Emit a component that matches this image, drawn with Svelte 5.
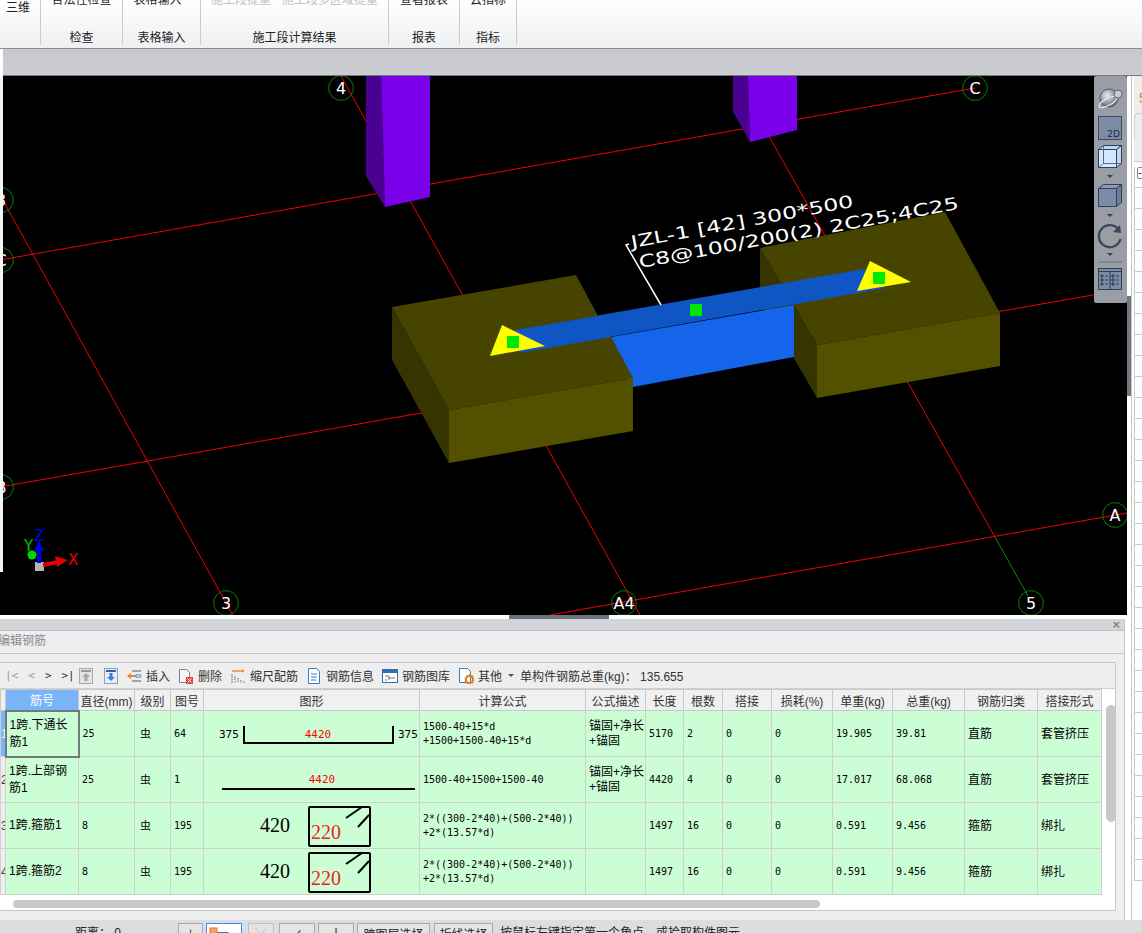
<script>
  const groups = [
    { width: 38, items: ["三维"], label: "", first: true },
    { width: 82, items: ["合法性检查"], label: "检查" },
    { width: 78, items: ["表格输入"], label: "表格输入", shift: -8 },
    { width: 188, items: ["施工段提量", "施工段多区域提量"], label: "施工段计算结果", muted: true },
    { width: 71, items: ["查看报表"], label: "报表" },
    { width: 57, items: ["云指标"], label: "指标" }
  ];

  const red = [
    [341, 76, 640, 615],
    [0, 195, 236, 621],
    [735, 76, 995, 537],
    [0, 260, 975, 88],
    [0, 487, 1127, 289],
    [550, 615, 1127, 513]
  ];

  const axes = [
    { x: 341, y: 88, t: "4" },
    { x: 975, y: 88, t: "C" },
    { x: 1, y: 200, t: "3" },
    { x: 1, y: 260, t: "C" },
    { x: 1, y: 487, t: "B" },
    { x: 226, y: 603, t: "3" },
    { x: 624, y: 603, t: "A4" },
    { x: 1031, y: 603, t: "5" },
    { x: 1115, y: 515, t: "A" }
  ];

  function ring(cx, cy) {
    let pts = [];
    for (let i = 0; i < 12; i++) {
      let a = (i * Math.PI) / 6 + 0.26;
      pts.push((cx + 12.5 * Math.cos(a)).toFixed(1) + "," + (cy + 12.5 * Math.sin(a)).toFixed(1));
    }
    return pts.join(" ");
  }

  const columns = [
    ["", 5], ["筋号", 73], ["直径(mm)", 56], ["级别", 36], ["图号", 33], ["图形", 216],
    ["计算公式", 166], ["公式描述", 60], ["长度", 38], ["根数", 39], ["搭接", 49],
    ["损耗(%)", 61], ["单重(kg)", 60], ["总重(kg)", 72], ["钢筋归类", 73], ["搭接形式", 64]
  ];

  const hoopFormula = "2*((300-2*40)+(500-2*40))\n+2*(13.57*d)";
  const rows = [
    { no: 1, name: "1跨.下通长\n筋1", dia: 25, fig: 64, shape: "u", formula: "1500-40+15*d\n+1500+1500-40+15*d", desc: "锚固+净长\n+锚固", len: 5170, count: 2, unit: "19.905", total: "39.81", kind: "直筋", join: "套管挤压" },
    { no: 2, name: "1跨.上部钢\n筋1", dia: 25, fig: 1, shape: "bar", formula: "1500-40+1500+1500-40", desc: "锚固+净长\n+锚固", len: 4420, count: 4, unit: "17.017", total: "68.068", kind: "直筋", join: "套管挤压" },
    { no: 3, name: "1跨.箍筋1", dia: 8, fig: 195, shape: "hoop", formula: hoopFormula, desc: "", len: 1497, count: 16, unit: "0.591", total: "9.456", kind: "箍筋", join: "绑扎" },
    { no: 4, name: "1跨.箍筋2", dia: 8, fig: 195, shape: "hoop", formula: hoopFormula, desc: "", len: 1497, count: 16, unit: "0.591", total: "9.456", kind: "箍筋", join: "绑扎" }
  ];

  const sideRows = Array.from({ length: 34 }, (_, i) => i);
</script>

<div class="app">
  <header class="ribbon">
    {#each groups as g}
      <section class="group" class:first={g.first} style="width:{g.width}px">
        <div class="items" class:muted={g.muted} style="margin-left:{g.shift || 0}px">
          {#each g.items as item}<span>{item}</span>{/each}
        </div>
        <div class="group-label">{g.label}</div>
      </section>
    {/each}
  </header>
  <div class="tabbar"></div>

  <div class="work">
    <div class="main">
      <div class="viewport">
        <svg class="scene" width="1127" height="539" viewBox="0 76 1127 539">
          <rect x="0" y="76" width="1127" height="539" fill="#000" />

          {#each red as l}
            <line x1={l[0]} y1={l[1]} x2={l[2]} y2={l[3]} stroke="#f00000" stroke-width="1" />
          {/each}
          <line x1="995" y1="537" x2="1028" y2="596" stroke="#0a8a0a" stroke-width="1" />

          {#each axes as a}
            <polygon points={ring(a.x, a.y)} fill="none" stroke="#0b7d0b" stroke-width="1" />
            <text class="axis" x={a.x} y={a.y + 6} text-anchor="middle">{a.t}</text>
          {/each}

          <polygon points="366,76 381,76 385,207 366,176" fill="#4a0090" />
          <polygon points="381,76 430,76 430,197 385,207" fill="#7a00ea" />
          <polygon points="733,76 748,76 750,142 733,112" fill="#4a0090" />
          <polygon points="748,76 797,76 797,130 750,142" fill="#7a00ea" />

          <polygon points="760,248 945,212 1000,313 817,345" fill="#474400" />
          <polygon points="760,248 817,345 817,398 760,300" fill="#363400" />
          <polygon points="817,345 1000,313 1000,366 817,398" fill="#535000" />

          <polygon points="611,337 794,305 794,357 633,387" fill="#1464ec" />
          <polygon points="515,330 864,269 886,288 519,353" fill="#0f55c4" />

          <polygon points="392,307 576,275 598,316 519,330 611,337 633,378 449,410" fill="#474400" />
          <polygon points="392,307 449,410 449,463 392,360" fill="#363400" />
          <polygon points="449,410 633,378 633,431 449,463" fill="#535000" />
          <polygon points="515,330 598,316 611,337 519,353" fill="#0f55c4" />

          <polygon points="502,325 545,346 490,356" fill="#ffff00" />
          <polygon points="870,261 911,282 857,291" fill="#ffff00" />
          <rect x="507" y="336" width="12" height="12" fill="#00e800" />
          <rect x="690" y="304" width="12" height="12" fill="#00e800" />
          <rect x="873" y="272" width="12" height="12" fill="#00e800" />

          <polyline points="629,244 626,245 661,305" fill="none" stroke="#fff" stroke-width="1.5" />
          <text class="note" x="632" y="248" textLength="226" lengthAdjust="spacingAndGlyphs" transform="rotate(-10.5 632 248)">JZL-1 [42] 300*500</text>
          <text class="note" x="640" y="268" textLength="325" lengthAdjust="spacingAndGlyphs" transform="rotate(-10.5 640 268)">C8@100/200(2) 2C25;4C25</text>

          <rect x="35" y="562" width="9" height="9" fill="#b5b5b5" />
          <line x1="43" y1="565" x2="58" y2="562" stroke="#e00000" stroke-width="4" />
          <polygon points="55,556 68,560 57,567" fill="#e00000" />
          <line x1="39" y1="563" x2="39" y2="548" stroke="#0000e8" stroke-width="4" />
          <polygon points="34,551 39,541 44,551" fill="#0000e8" />
          <circle cx="32" cy="555" r="4.5" fill="#00d800" />
          <text class="gizmo" x="34" y="541" fill="#0000f0">Z</text>
          <text class="gizmo" x="24" y="551" fill="#00c800">Y</text>
          <text class="gizmo" x="68" y="565" fill="#f00000">X</text>

          <rect x="0" y="76" width="3" height="496" fill="#f4f4f4" />
        </svg>

        <div class="viewtools">
          <svg width="33" height="227" viewBox="1094 76 33 227">
            <defs>
              <radialGradient id="ball" cx="40%" cy="35%" r="70%">
                <stop offset="0" stop-color="#e8ebf0" />
                <stop offset="1" stop-color="#5c6674" />
              </radialGradient>
            </defs>
            <circle cx="1109" cy="98" r="9" fill="url(#ball)" stroke="#4d5765" />
            <ellipse cx="1108" cy="102" rx="10" ry="3.5" transform="rotate(-28 1108 102)" fill="none" stroke="#e8ebf0" stroke-width="1.2" />
            <circle cx="1118" cy="94" r="4" fill="#c8ced6" stroke="#5a6472" />

            <rect x="1098.5" y="116.5" width="23" height="23" fill="#7c8ca6" stroke="#3b4a60" />
            <text class="tool2d" x="1120" y="137" text-anchor="end">2D</text>

            <rect x="1098.5" y="149.5" width="18" height="18" fill="#d3e8ff" stroke="#2f3f55" />
            <polygon points="1098.5,149.5 1103.5,145.5 1121.5,145.5 1116.5,149.5" fill="#bcd8f6" stroke="#2f3f55" />
            <polygon points="1116.5,149.5 1121.5,145.5 1121.5,163.5 1116.5,167.5" fill="#bcd8f6" stroke="#2f3f55" />
            <path d="M1103.5 145.5v18h18M1103.5 163.5l-5 4" fill="none" stroke="#5a6b82" />
            <polygon points="1107,175 1113,175 1110,178" fill="#2f3f55" />

            <rect x="1098.5" y="188.5" width="18" height="18" fill="#7c8ca6" stroke="#2f3f55" />
            <polygon points="1098.5,188.5 1103.5,184.5 1121.5,184.5 1116.5,188.5" fill="#8c9bb3" stroke="#2f3f55" />
            <polygon points="1116.5,188.5 1121.5,184.5 1121.5,202.5 1116.5,206.5" fill="#6d7d97" stroke="#2f3f55" />
            <polygon points="1107,214 1113,214 1110,217" fill="#2f3f55" />

            <path d="M1119 230a11 11 0 1 0 1.5 9" fill="none" stroke="#3b4658" stroke-width="2.4" />
            <polygon points="1113,232 1121,233 1120,225" fill="#3b4658" />
            <polygon points="1107,253 1113,253 1110,256" fill="#2f3f55" />

            <line x1="1099" y1="262" x2="1122" y2="262" stroke="#6b7280" />
            <rect x="1098.5" y="268.5" width="23" height="21" fill="#7c8ca6" stroke="#2f3f55" />
            <line x1="1098" y1="271.5" x2="1122" y2="271.5" stroke="#2f3f55" />
            <line x1="1110" y1="272" x2="1110" y2="289" stroke="#2f3f55" />
            <path d="M1101 275h2v2h-2zM1105 276h3M1101 279h2v2h-2zM1105 280h3M1101 283h2v2h-2zM1105 284h3M1112 275h2v2h-2zM1116 276h3M1112 279h2v2h-2zM1116 280h3M1112 283h2v2h-2zM1116 284h3" fill="none" stroke="#1f2a3a" stroke-width="0.8" />
          </svg>
        </div>
      </div>

      <div class="sash"><div class="sash-grip"></div></div>

      <section class="panel">
        <div class="panel-strip"><span class="close">×</span></div>
        <div class="panel-title">编辑钢筋</div>

        <div class="box">
          <div class="toolbar">
            <span class="pager">
              <span class="off">|&lt;</span><span class="off">&lt;</span><span>&gt;</span><span>&gt;|</span>
            </span>
            <svg class="ico up" width="14" height="16" viewBox="0 0 14 16">
              <rect x="0.5" y="0.5" width="13" height="15" fill="#e4e4e4" stroke="#aaa" />
              <rect x="2" y="2" width="10" height="2" fill="#999" />
              <path d="M7 5l4 4H8.5v4h-3V9H3z" fill="#a5a5a5" />
            </svg>
            <svg class="ico down" width="14" height="16" viewBox="0 0 14 16">
              <rect x="0.5" y="0.5" width="13" height="15" fill="#e8eef6" stroke="#8aa0bc" />
              <rect x="2" y="2" width="10" height="2" fill="#3a5f90" />
              <path d="M5.5 5h3v4H11l-4 4-4-4h2.5z" fill="#2f7fd8" />
            </svg>

            <span class="tool first">
              <svg width="16" height="16" viewBox="0 0 16 16">
                <path d="M6 3h9M6 8h9M6 13h9" stroke="#7f8fa5" stroke-width="1.4" />
                <path d="M1 8l4-3v2h5v2H5v2z" fill="#e8862a" />
                <path d="M10 6.5h5v3h-5z" fill="#9fd0f0" stroke="#4a90d0" stroke-width="0.6" />
              </svg>
              插入
            </span>
            <span class="tool">
              <svg width="16" height="16" viewBox="0 0 16 16">
                <path d="M1.5 1.5h7l3 3v10h-10z" fill="#f6f6f6" stroke="#7b8794" />
                <rect x="8" y="9" width="7" height="7" fill="#e04a3c" />
                <path d="M9.5 10.5l4 4M13.5 10.5l-4 4" stroke="#fff" />
              </svg>
              删除
            </span>
            <span class="tool">
              <svg width="16" height="16" viewBox="0 0 16 16">
                <path d="M2 3h11" stroke="#e8862a" stroke-width="1.4" />
                <path d="M12 1l2.5 2-2.5 2z" fill="#e8862a" />
                <path d="M2 6v9M5 8v7M8 10v5M11 12v3M14 13.500v1.500" stroke="#6a7f98" stroke-width="1.2" stroke-dasharray="1.5 1" />
              </svg>
              缩尺配筋
            </span>
            <span class="tool">
              <svg width="16" height="16" viewBox="0 0 16 16">
                <path d="M2.5 0.5h8l3 3v12h-11z" fill="#fff" stroke="#2f7fc4" />
                <path d="M5 6h6M5 9h6M5 12h5" stroke="#2f7fc4" />
              </svg>
              钢筋信息
            </span>
            <span class="tool">
              <svg width="16" height="16" viewBox="0 0 16 16">
                <rect x="0.5" y="1.5" width="15" height="13" fill="#fff" stroke="#2f6fb4" />
                <rect x="1" y="2" width="14" height="3" fill="#2f6fb4" />
                <path d="M3 8h4v4M7 10h6M3 12h2" fill="none" stroke="#777" />
              </svg>
              钢筋图库
            </span>
            <span class="tool">
              <svg width="16" height="16" viewBox="0 0 16 16">
                <path d="M1.5 0.5h8l3 3v11h-11z" fill="#fff" stroke="#2f7fc4" />
                <circle cx="11.5" cy="11.5" r="3.5" fill="none" stroke="#ee7a1a" stroke-width="2" />
                <circle cx="11.5" cy="11.5" r="4.6" fill="none" stroke="#ee7a1a" stroke-width="1.2" stroke-dasharray="1.5 1.4" />
              </svg>
              其他
            </span>
            <span class="caret"></span>
            <span class="weight">单构件钢筋总重(kg)： 135.655</span>
          </div>

          <div class="grid-wrap">
            <table>
              <colgroup>
                {#each columns as c}<col style="width:{c[1]}px" />{/each}
              </colgroup>
              <thead>
                <tr>
                  {#each columns as c, i}
                    <th class:active={i === 1}>{c[0]}</th>
                  {/each}
                </tr>
              </thead>
              <tbody>
                {#each rows as r, i}
                  <tr>
                    <td class="rowno" class:on={i === 0}>{r.no}</td>
                    <td class="cjk name" class:current={i === 0}>{r.name}</td>
                    <td class="num">{r.dia}</td>
                    <td class="cjk grade">虫</td>
                    <td class="num">{r.fig}</td>
                    <td class="fig">
                      <svg width="216" height="45" viewBox="0 0 216 45">
                        {#if r.shape === "u"}
                          <text class="dim" x="15" y="27">375</text>
                          <path d="M40 15v17h149V15" fill="none" stroke="#000" stroke-width="2" />
                          <text class="len" x="114" y="27" text-anchor="middle">4420</text>
                          <text class="dim" x="194" y="27">375</text>
                        {:else if r.shape === "bar"}
                          <text class="len" x="118" y="26" text-anchor="middle">4420</text>
                          <line x1="18" y1="32" x2="211" y2="32" stroke="#000" stroke-width="2" />
                        {:else}
                          <text class="big" x="56" y="29">420</text>
                          <rect x="105" y="4" width="61" height="39" rx="1" fill="none" stroke="#000" stroke-width="2" />
                          <path d="M142 15l16-11M154 24l11-12" stroke="#000" stroke-width="2" fill="none" />
                          <text class="big red" x="107" y="36">220</text>
                        {/if}
                      </svg>
                    </td>
                    <td class="num pre">{r.formula}</td>
                    <td class="cjk desc">{r.desc}</td>
                    <td class="num">{r.len}</td>
                    <td class="num">{r.count}</td>
                    <td class="num">0</td>
                    <td class="num">0</td>
                    <td class="num">{r.unit}</td>
                    <td class="num">{r.total}</td>
                    <td class="cjk">{r.kind}</td>
                    <td class="cjk">{r.join}</td>
                  </tr>
                {/each}
              </tbody>
            </table>
            <div class="vscroll"><div class="vthumb"></div></div>
          </div>
          <div class="hscroll"><div class="hthumb"></div></div>
        </div>
      </section>
    </div>

    <aside class="side">
      <div class="side-inner">
        <div class="side-head"><span>5</span></div>
        <div class="side-tab"></div>
        <div class="side-col"></div>
        {#each sideRows as i}
          <div class="side-row">{#if i === 0}<span class="expand">-</span>{/if}</div>
        {/each}
      </div>
    </aside>
  </div>

  <footer class="status">
    <span class="dist">距离： 0</span>
    <button class="sm" style="margin-left:49px">⊥</button>
    <button class="pick">
      <svg width="28" height="14" viewBox="0 0 28 14">
        <path d="M5.5 5.500h14v9h-14z" fill="none" stroke="#3a78c0" />
        <rect x="1" y="1" width="7" height="7" fill="#f5a55a" stroke="#d87a28" />
      </svg>
    </button>
    <button class="sm off" disabled>╳</button>
    <button class="md">∠</button>
    <button class="md plus">十</button>
    <button class="wide">跨图层选择</button>
    <button class="wide line">折线选择</button>
    <span class="hint">按鼠标左键指定第一个角点，或拾取构件图元</span>
  </footer>
</div>

<style>
  :global(body) {
    margin: 0;
    background: #fff;
  }
  .app {
    width: 1142px;
    height: 933px;
    overflow: hidden;
    font-family: "Liberation Sans", "Noto Sans CJK SC", sans-serif;
    font-size: 12px;
    color: #222;
    background: #fff;
  }

  .ribbon {
    display: flex;
    height: 49px;
    padding-left: 3px;
    box-sizing: border-box;
    background: linear-gradient(#fff, #eef0f2);
    border-bottom: 1px solid #8b8e93;
  }
  .group {
    display: flex;
    flex-direction: column;
    justify-content: flex-end;
    align-items: center;
    box-sizing: border-box;
    height: 45px;
    border-right: 1px solid #c9cbce;
  }
  .group.first {
    align-items: flex-start;
    padding-left: 3px;
  }
  .items {
    display: flex;
    gap: 11px;
    line-height: 16px;
    white-space: nowrap;
    margin-bottom: 21px;
  }
  .items.muted {
    color: #c2c2c2;
  }
  .group-label {
    height: 18px;
    line-height: 18px;
    margin-bottom: -2px;
    white-space: nowrap;
  }
  .tabbar {
    height: 27px;
    margin-left: 3px;
    box-sizing: border-box;
    background: linear-gradient(#c6c8cd, #cbcdd1);
    border-bottom: 1px solid #77797d;
  }

  .work {
    display: flex;
    height: 844px;
  }
  .main {
    width: 1127px;
    flex: none;
  }
  .viewport {
    position: relative;
    height: 539px;
  }
  .scene {
    display: block;
  }
  .viewtools {
    position: absolute;
    right: 0;
    top: 0;
    width: 33px;
    height: 227px;
    background: #9a9da3;
    border-radius: 2px;
  }
  .viewtools svg {
    display: block;
  }
  .axis {
    font: 16px "DejaVu Sans", sans-serif;
    fill: #fff;
  }
  .note {
    font: 17px "DejaVu Sans", sans-serif;
    fill: #fff;
  }
  .gizmo {
    font: 15px "DejaVu Sans", sans-serif;
  }
  .tool2d {
    font: 9px "DejaVu Sans", sans-serif;
    fill: #1f2a3a;
  }

  .sash {
    height: 4px;
    background: #fff;
    padding-left: 509px;
  }
  .sash-grip {
    width: 100px;
    height: 4px;
    background: #6b747c;
  }

  .panel {
    height: 301px;
    width: 1125px;
    background: #eee;
    box-sizing: border-box;
    border-right: 1px solid #c8c8c8;
  }
  .panel-strip {
    height: 12px;
    background: #d4d5da;
    border-bottom: 1px solid #c0c1c6;
    box-sizing: border-box;
    display: flex;
    justify-content: flex-end;
  }
  .close {
    font-size: 13px;
    line-height: 11px;
    color: #888;
    margin-right: 4px;
    font-weight: bold;
  }
  .panel-title {
    height: 22px;
    line-height: 21px;
    color: #8a8a8a;
    margin-left: -2px;
    border-bottom: 1px solid #c8c8c8;
  }
  .box {
    width: 1116px;
    height: 249px;
    margin-top: 8px;
    box-sizing: border-box;
    border-top: 1px solid #c8c8c8;
    border-right: 1px solid #c8c8c8;
    border-bottom: 1px solid #c8c8c8;
    background: #fff;
  }

  .toolbar {
    display: flex;
    align-items: center;
    height: 25px;
    background: #eee;
    color: #333;
    border-bottom: 1px solid #d0d0d0;
    white-space: nowrap;
  }
  .pager {
    display: flex;
    width: 79px;
    font: 11px "DejaVu Sans Mono", monospace;
    padding-left: 5px;
    box-sizing: border-box;
    gap: 10px;
  }
  .pager .off {
    color: #999;
  }
  .ico {
    flex: none;
  }
  .ico.down {
    margin-left: 11px;
  }
  .tool {
    display: flex;
    align-items: center;
    gap: 4px;
    margin-left: 8px;
  }
  .caret {
    width: 0;
    height: 0;
    margin: 0 6px 0 6px;
    border: 3px solid transparent;
    border-top: 3px solid #555;
    border-bottom: 0;
  }

  .grid-wrap {
    display: flex;
    height: 207px;
    overflow: hidden;
  }
  table {
    width: 1101px;
    flex: none;
    align-self: flex-start;
    table-layout: fixed;
    border-collapse: collapse;
    background: #ccfed6;
  }
  th {
    height: 21px;
    padding: 0;
    box-sizing: border-box;
    font-weight: normal;
    color: #333;
    background: #f0f0f0;
    border: 1px solid #c8c8c8;
    white-space: nowrap;
    overflow: hidden;
  }
  th.active {
    background: #78b4f7;
    color: #fff;
  }
  td {
    height: 46px;
    padding: 0 0 0 3px;
    box-sizing: border-box;
    border: 1px solid #d0d0d0;
    overflow: hidden;
    color: #000;
  }
  .rowno {
    padding: 0;
    background: #eee;
    color: #345;
    text-align: right;
    font-size: 12px;
  }
  .rowno.on {
    background: #78b4f7;
    color: #fff;
  }
  .cjk {
    line-height: 14px;
    white-space: pre-line;
  }
  .name {
    line-height: 17px;
  }
  .name.current {
    border: 2px solid #707a7a;
  }
  .grade {
    padding-left: 5px;
    font-size: 11px;
  }
  .desc {
    line-height: 15px;
  }
  .num {
    font: 10px/14px "DejaVu Sans Mono", monospace;
  }
  .pre {
    white-space: pre;
  }
  .fig {
    padding: 0;
  }
  .fig svg {
    display: block;
  }
  .dim {
    font: 11px "DejaVu Sans Mono", monospace;
  }
  .len {
    font: 11px "DejaVu Sans Mono", monospace;
    fill: #f00;
  }
  .big {
    font: 20px "Liberation Serif", serif;
  }
  .big.red {
    fill: #f02020;
  }
  .vscroll {
    flex: 1;
    padding: 16px 0 0 4px;
  }
  .vthumb {
    width: 10px;
    height: 117px;
    border-radius: 5px;
    background: #c8c8c8;
  }
  .hscroll {
    height: 14px;
    padding: 4px 0 0 13px;
    box-sizing: border-box;
  }
  .hthumb {
    width: 807px;
    height: 8px;
    border-radius: 4px;
    background: #c8c8c8;
  }

  .side {
    flex: 1;
    padding-left: 4px;
    background: #fff;
    position: relative;
  }
  .side::before {
    content: "";
    display: block;
    position: absolute;
    left: 0;
    top: 220px;
    width: 4px;
    height: 100px;
    background: #6f7881;
  }
  .side-inner {
    height: 100%;
    box-sizing: border-box;
    border-left: 1px solid #c8c8c8;
    padding-left: 2px;
    overflow: hidden;
  }
  .side-head {
    height: 37px;
    background: #eee;
    color: #c48a3a;
    padding-left: 5px;
    line-height: 44px;
    font-size: 14px;
  }
  .side-tab {
    height: 27px;
    background: #eee;
    border-radius: 4px 0 0 0;
    box-shadow: inset 1px 1px 0 #ccc;
  }
  .side-col {
    height: 22px;
    background: #eee;
    border-bottom: 1px solid #ccc;
    box-sizing: border-box;
  }
  .side-row {
    height: 21px;
    box-sizing: border-box;
    border-bottom: 1px solid #ccc;
    border-left: 1px solid #ccc;
    padding-left: 2px;
  }
  .expand {
    display: block;
    width: 12px;
    height: 10px;
    margin-top: 5px;
    border: 1px solid #888;
    border-radius: 2px;
    line-height: 9px;
    font-size: 11px;
  }

  .status {
    display: flex;
    align-items: flex-start;
    height: 13px;
    padding-top: 3px;
    background: #dcdde0;
    white-space: nowrap;
    overflow: visible;
  }
  .dist {
    margin-left: 75px;
    width: 54px;
    flex: none;
  }
  .status button {
    flex: none;
    height: 20px;
    padding: 0;
    font: 12px "Liberation Sans", "Noto Sans CJK SC", sans-serif;
    color: #222;
    background: #e4e4e6;
    border: 1px solid #a8a8a8;
    margin-left: 3px;
  }
  .status .sm {
    width: 25px;
  }
  .status .pick {
    width: 36px;
    background: #fff;
    border: 1px solid #3a8ee8;
    text-align: left;
  }
  .pick svg {
    display: block;
    margin: 1px 0 0 2px;
  }
  .status .off {
    margin-left: 6px;
    width: 26px;
    color: #aaa;
    border-color: #c0c0c0;
  }
  .status .md {
    width: 36px;
    margin-left: 5px;
  }
  .status .plus {
    margin-left: 3px;
  }
  .status .wide {
    width: 73px;
  }
  .status .line {
    width: 59px;
    margin-left: 4px;
  }
  .hint {
    margin-left: 7px;
  }
</style>
